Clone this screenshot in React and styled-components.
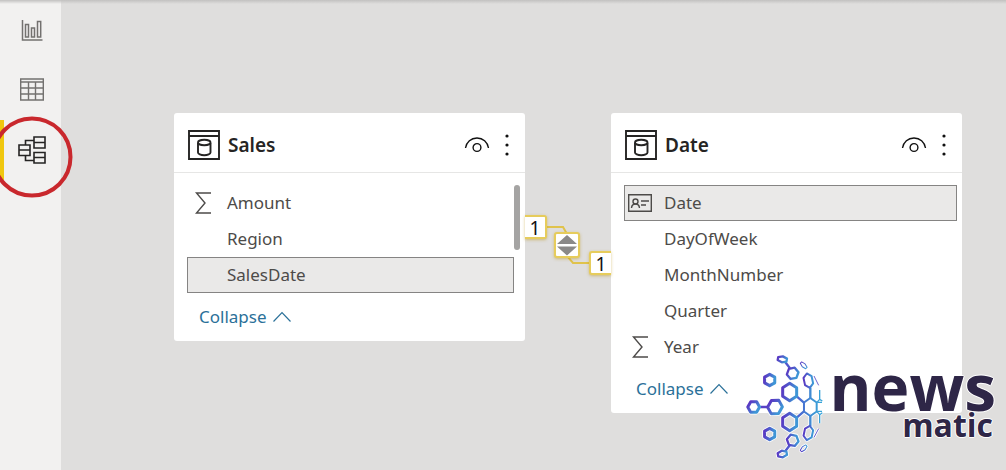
import React from "react";
import styled, { createGlobalStyle } from "styled-components";

const GlobalStyle = createGlobalStyle`
  * {
    box-sizing: border-box;
  }
  body {
    margin: 0;
    background-color: #dfdedd;
    font-family: "Noto Sans", "Open Sans", sans-serif;
    color: #252423;
  }
  button {
    font: inherit;
    color: inherit;
    padding: 0;
    border: none;
    background: none;
    cursor: pointer;
  }
  svg {
    display: block;
  }
`;

const Page = styled.div`
  display: flex;
  position: relative;
  min-height: 100vh;
  overflow: hidden;
`;

const TopShade = styled.div`
  position: absolute;
  inset: 0 0 auto 0;
  height: 4px;
  background: linear-gradient(#c2c1c0, rgba(200, 199, 198, 0));
`;

const Sidebar = styled.nav`
  position: relative;
  flex: none;
  width: 61px;
  background-color: #f2f1f0;
`;

const ViewButton = styled.button`
  display: flex;
  align-items: center;
  justify-content: center;
  width: 100%;
  height: 60px;
  padding-left: 3px;
  color: ${(props) => (props.$active ? "#252423" : "#73716f")};
  box-shadow: ${(props) => (props.$active ? "inset 4px 0 #f0c70f" : "none")};
`;

const Highlight = styled.svg`
  position: absolute;
  left: -9px;
  top: 116px;
  z-index: 2;
  pointer-events: none;
`;

const Canvas = styled.main`
  flex: 1;
  position: relative;
`;

const Card = styled.section`
  position: absolute;
  left: ${(props) => props.$x}px;
  top: ${(props) => props.$y}px;
  width: 351px;
  background-color: #fff;
  border-radius: 3px;
`;

const CardHeader = styled.header`
  display: flex;
  align-items: center;
  height: 60px;
  padding: 4px 6px 0 14px;
  border-bottom: 1px solid #e6e6e5;
`;

const CardTitle = styled.h2`
  flex: 1;
  margin: 0 0 0 8px;
  font-size: 19px;
  line-height: 28px;
  font-weight: 600;
`;

const IconButton = styled.button`
  display: flex;
  align-items: center;
  justify-content: center;
  width: ${(props) => props.$width}px;
  height: 30px;
`;

const CardBody = styled.div`
  display: flex;
  padding: 12px 5px 0 13px;
`;

const FieldList = styled.ul`
  flex: 1;
  margin: 0;
  padding: 0;
  list-style: none;
`;

const Field = styled.li`
  display: flex;
  align-items: center;
  height: 36px;
  border: 1px solid ${(props) => (props.$selected ? "#858483" : "transparent")};
  background-color: ${(props) => (props.$selected ? "#eae9e8" : "transparent")};
  color: #4d4b49;
  font-size: 17px;
  line-height: 24px;
`;

const FieldIcon = styled.span`
  flex: none;
  display: flex;
  justify-content: center;
  width: 30px;
  margin-right: 9px;
`;

const ScrollThumb = styled.div`
  width: 6px;
  height: 65px;
  border-radius: 3px;
  background-color: #a5a4a3;
`;

const Collapse = styled.button`
  display: flex;
  align-items: center;
  gap: 6px;
  height: 48px;
  margin-left: 25px;
  color: #2b7199;
  font-size: 17px;
  line-height: 24px;
`;

const Link = styled.svg`
  position: absolute;
  left: 464px;
  top: 200px;
`;

const Cardinality = styled.span`
  position: absolute;
  left: ${(props) => props.$x}px;
  top: ${(props) => props.$y}px;
  width: 22px;
  height: 24px;
  border: 2px solid #e6cc5c;
  border-${(props) => props.$open}: none;
  border-radius: ${(props) => (props.$open === "left" ? "0 3px 3px 0" : "3px 0 0 3px")};
  box-shadow: 0 1px 3px rgba(190, 150, 20, 0.5);
  background-color: #fff;
  color: #111;
  font-size: 19px;
  line-height: 22px;
  text-align: center;
`;

const CrossFilter = styled.span`
  position: absolute;
  left: 493px;
  top: 232px;
  display: flex;
  align-items: center;
  justify-content: center;
  width: 26px;
  height: 26px;
  border: 2px solid #e6cc5c;
  border-radius: 3px;
  box-shadow: 0 1px 3px rgba(190, 150, 20, 0.5);
  background-color: #fff;
`;

const Brand = styled.div`
  position: absolute;
  right: 10px;
  bottom: 0;
  display: flex;
  align-items: flex-start;
  height: 130px;
  color: #2e2647;
`;

const BrandName = styled.div`
  display: flex;
  flex-direction: column;
  align-items: flex-end;
  padding-top: 21px;
  font-family: "Open Sans", "Noto Sans", sans-serif;
  font-weight: 700;
  text-shadow: 1px 0 #fff, -1px 0 #fff, 0 1px #fff, 0 -1px #fff;
`;

const BrandTop = styled.span`
  font-size: 64px;
  line-height: 52px;
`;

const BrandBottom = styled.span`
  padding-right: 3px;
  font-size: 32px;
  line-height: 24px;
`;

const ReportIcon = () => (
  <svg width="22" height="22" viewBox="0 0 22 22" fill="none" stroke="currentColor" strokeWidth="1.5">
    <path d="M1.500 1v20H21.500" />
    <path d="M4.500 5.500h3v12.500h-3zM10.500 9h3v9h-3zM16.500 2.500h3.200V18h-3.200z" />
  </svg>
);

const DataIcon = () => (
  <svg width="24" height="24" viewBox="0 0 24 24" fill="none" stroke="currentColor" strokeWidth="1.400">
    <path d="M.7 1h22.600v21H.7zM.7 4h22.600M.7 10h22.600M.7 16h22.600M8.500 4v18M15.500 4v18" />
  </svg>
);

const ModelIcon = () => (
  <svg width="28" height="28" viewBox="0 0 28 28" fill="none" stroke="currentColor" strokeWidth="1.600">
    <path d="M16 1h11v11H16zM16 6.500h11M16 16.500h11v10.500H16zM16 21.500h11M1 9h11v10.500H1zM1 14h11" />
    <path d="M7.500 9V4.500H16M7.500 19.500v5H16" />
  </svg>
);

const TableIcon = () => (
  <svg width="32" height="30" viewBox="0 0 32 30" fill="none" stroke="#252423" strokeWidth="1.900">
    <path d="M1 1h30v28H1zM1 6h30" />
    <path d="M10 13v9.500c0 1.500 2.700 2.800 6.200 2.800s6.300-1.300 6.300-2.800V13" />
    <ellipse cx="16.250" cy="12.500" rx="6.250" ry="2.700" />
  </svg>
);

const EyeIcon = () => (
  <svg width="26" height="16" viewBox="0 0 26 16" fill="none" stroke="#111" strokeWidth="1.400">
    <path d="M1.500 11C2.500 5 7 1 13 1S23.500 5 24.500 11" />
    <circle cx="13" cy="10.500" r="3.900" />
  </svg>
);

const DotsIcon = () => (
  <svg width="4" height="22" viewBox="0 0 4 22" fill="#111">
    <circle cx="2" cy="2" r="1.600" />
    <circle cx="2" cy="11" r="1.600" />
    <circle cx="2" cy="20" r="1.600" />
  </svg>
);

const SigmaIcon = () => (
  <svg width="18" height="24" viewBox="0 0 18 24" fill="none" stroke="#4d4b49" strokeWidth="1.400">
    <path d="M17 2H2.500l8.500 10-8.500 10H17" />
  </svg>
);

const CardIdIcon = () => (
  <svg width="24" height="18" viewBox="0 0 24 18" fill="none" stroke="#4d4b49" strokeWidth="1.400">
    <path d="M.7.7h22.600v16.600H.7zM13 7h8M13 11h5" />
    <circle cx="7.500" cy="7.500" r="2.500" />
    <path d="M3.500 14c.2-2.500 1.700-4 4-4s3.800 1.500 4 4" />
  </svg>
);

const ChevronIcon = () => (
  <svg width="18" height="12" viewBox="0 0 18 12" fill="none" stroke="currentColor" strokeWidth="1.200">
    <path d="M.5 10.500L9 1.500l8.500 9" />
  </svg>
);

const fieldIcons = { sum: <SigmaIcon />, key: <CardIdIcon /> };

const tables = [
  {
    name: "Sales",
    x: 113,
    y: 113,
    scroll: true,
    fields: [
      { name: "Amount", icon: "sum" },
      { name: "Region" },
      { name: "SalesDate", selected: true },
    ],
  },
  {
    name: "Date",
    x: 550,
    y: 113,
    fields: [
      { name: "Date", icon: "key", selected: true },
      { name: "DayOfWeek" },
      { name: "MonthNumber" },
      { name: "Quarter" },
      { name: "Year", icon: "sum" },
    ],
  },
];

const TableCard = ({ table }) => (
  <Card $x={table.x} $y={table.y}>
    <CardHeader>
      <TableIcon />
      <CardTitle>{table.name}</CardTitle>
      <IconButton $width={36} aria-label={`Hide ${table.name}`}>
        <EyeIcon />
      </IconButton>
      <IconButton $width={24} aria-label="More options">
        <DotsIcon />
      </IconButton>
    </CardHeader>
    <CardBody>
      <FieldList>
        {table.fields.map((field) => (
          <Field key={field.name} $selected={field.selected}>
            <FieldIcon>{fieldIcons[field.icon]}</FieldIcon>
            {field.name}
          </Field>
        ))}
      </FieldList>
      {table.scroll && <ScrollThumb />}
    </CardBody>
    <Collapse>
      Collapse
      <ChevronIcon />
    </Collapse>
  </Card>
);

// [cx, cy, rx, ry, stroke width, rotation]
const hexes = [
  [127, 58, 14, 9, 7, 10],
  [158, 100, 16, 18, 7, 20],
  [89, 120, 16, 17, 9, 0],
  [149, 156, 22, 26, 9, 0],
  [205, 122, 13, 22, 6, -12],
  [191, 76, 12, 6, 3, 45],
  [41, 201, 16, 18, 9, 30],
  [105, 201, 20, 23, 9, 30],
  [149, 246, 22, 26, 9, 0],
  [211, 201, 20, 27, 6, 0],
  [89, 282, 16, 17, 9, 0],
  [205, 279, 13, 22, 6, 12],
  [158, 301, 16, 18, 7, -20],
  [127, 342, 14, 10, 7, -10],
  [191, 325, 12, 6, 3, -45],
];

const hexPoints = (cx, cy, rx, ry) =>
  [0, 1, 2, 3, 4, 5]
    .map((i) => {
      const a = (Math.PI / 3) * i + Math.PI / 6;
      return `${cx + rx * 1.1 * Math.cos(a)},${cy + ry * Math.sin(a)}`;
    })
    .join(" ");

const links = [
  { width: 7, d: "M136 67l14 18M62 201h22M136 333l14-18" },
  { width: 7, d: "M170 169l21 18M170 233l21-18M211 144v30M211 228v30" },
  { width: 4, d: "M230 188l9-10v-28M230 214l9 10v26M239 178l8 5M239 224l8-6M233 187h13M233 214h13" },
  { width: 3, d: "M222 108l14 28M236 266l-14 26" },
];

const Mesh = ({ halo = 0 }) => (
  <g strokeLinejoin="round">
    {links.map((link, i) => (
      <path
        key={link.d}
        d={link.d}
        strokeWidth={link.width + halo}
        stroke={halo ? "#fff" : i === 3 ? "#6f63cf" : "url(#globe)"}
      />
    ))}
    {hexes.map(([cx, cy, rx, ry, w, r]) => (
      <polygon
        key={`${cx}-${cy}`}
        points={hexPoints(cx, cy, rx, ry)}
        strokeWidth={w + halo}
        stroke={halo ? "#fff" : cx === 211 ? "url(#globe)" : "url(#cell)"}
        transform={`rotate(${r} ${cx} ${cy})`}
      />
    ))}
  </g>
);

const Globe = () => (
  <svg width="90" height="130" viewBox="0 0 270 390" fill="none">
    <defs>
      <linearGradient id="globe" gradientUnits="userSpaceOnUse" x1="50" y1="0" x2="250" y2="0">
        <stop offset="0" stopColor="#5b3cc4" />
        <stop offset="0.6" stopColor="#4d5fd0" />
        <stop offset="0.85" stopColor="#3e94d4" />
        <stop offset="1" stopColor="#38a9da" />
      </linearGradient>
      <linearGradient id="cell" x1="0" y1="0" x2="1" y2="0.200">
        <stop offset="0" stopColor="#5a36c2" />
        <stop offset="0.5" stopColor="#4d62cc" />
        <stop offset="1" stopColor="#3f96d6" />
      </linearGradient>
    </defs>
    <Mesh halo={5} />
    <Mesh />
  </svg>
);

const App = () => {
  return (
    <>
      <GlobalStyle />
      <Page>
        <Sidebar>
          <ViewButton aria-label="Report">
            <ReportIcon />
          </ViewButton>
          <ViewButton aria-label="Data">
            <DataIcon />
          </ViewButton>
          <ViewButton $active aria-label="Model">
            <ModelIcon />
          </ViewButton>
          <Highlight width="82" height="82" viewBox="0 0 82 82" fill="none">
            <circle cx="41" cy="41" r="38.500" stroke="#c9282d" strokeWidth="4" />
          </Highlight>
        </Sidebar>
        <Canvas>
          <Link width="86" height="80" viewBox="0 0 86 80" fill="none" stroke="#e0c34c" strokeWidth="2">
            <path d="M20 27h18l4 7v22l6 7h20" />
          </Link>
          {tables.map((table) => (
            <TableCard key={table.name} table={table} />
          ))}
          <Cardinality $x={464} $y={215} $open="left">
            1
          </Cardinality>
          <CrossFilter>
            <svg width="20" height="22" viewBox="0 0 20 22" fill="#8a8988">
              <path d="M0 10L10 1l10 9zM0 12.500h20L10 21.500z" />
            </svg>
          </CrossFilter>
          <Cardinality $x={528} $y={251} $open="right">
            1
          </Cardinality>
        </Canvas>
        <TopShade />
        <Brand>
          <Globe />
          <BrandName>
            <BrandTop>news</BrandTop>
            <BrandBottom>matic</BrandBottom>
          </BrandName>
        </Brand>
      </Page>
    </>
  );
};

export default App;
